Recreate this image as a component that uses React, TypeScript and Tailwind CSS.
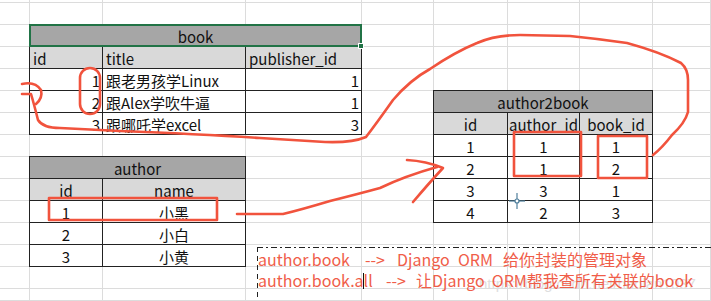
type Cell = { c: string; t?: string; a?: 'l' | 'r' | 'c' };

const base =
  'flex items-center border-r border-b border-[#222] text-[15px] leading-none text-[#111] pt-[2px] whitespace-nowrap';

const align = (a?: 'l' | 'r' | 'c') =>
  a === 'l' ? 'justify-start pl-[3px]' : a === 'r' ? 'justify-end pr-[2px]' : 'justify-center';

const book: Cell[] = [
  { c: 'row-start-4 col-start-2 bg-[#d9d9d9] border-l -ml-px', t: 'id', a: 'l' },
  { c: 'row-start-4 col-start-3 bg-[#d9d9d9]', t: 'title', a: 'l' },
  { c: 'row-start-4 col-start-4 bg-[#d9d9d9]', t: 'publisher_id', a: 'l' },
  { c: 'row-start-5 col-start-2 border-l -ml-px', t: '1', a: 'r' },
  { c: 'row-start-5 col-start-3', t: '跟老男孩学Linux', a: 'l' },
  { c: 'row-start-5 col-start-4', t: '1', a: 'r' },
  { c: 'row-start-6 col-start-2 border-l -ml-px', t: '2', a: 'r' },
  { c: 'row-start-6 col-start-3', t: '跟Alex学吹牛逼', a: 'l' },
  { c: 'row-start-6 col-start-4', t: '1', a: 'r' },
  { c: 'row-start-7 col-start-2 border-l -ml-px', t: '3', a: 'r' },
  { c: 'row-start-7 col-start-3', t: '跟哪吒学excel', a: 'l' },
  { c: 'row-start-7 col-start-4', t: '3', a: 'r' },
];

const author: Cell[] = [
  { c: 'row-start-9 col-start-2 col-span-2 bg-[#a6a6a6] border-t border-l -mt-px -ml-px', t: 'author' },
  { c: 'row-start-10 col-start-2 bg-[#d9d9d9] border-l -ml-px', t: 'id' },
  { c: 'row-start-10 col-start-3 bg-[#d9d9d9]', t: 'name' },
  { c: 'row-start-11 col-start-2 border-l -ml-px', t: '1' },
  { c: 'row-start-11 col-start-3', t: '小黑' },
  { c: 'row-start-12 col-start-2 border-l -ml-px', t: '2' },
  { c: 'row-start-12 col-start-3', t: '小白' },
  { c: 'row-start-13 col-start-2 border-l -ml-px', t: '3' },
  { c: 'row-start-13 col-start-3', t: '小黄' },
];

const a2b: Cell[] = [
  { c: 'row-start-6 col-start-6 col-span-3 bg-[#a6a6a6] border-t border-l -mt-px -ml-px', t: 'author2book' },
  { c: 'row-start-7 col-start-6 bg-[#d9d9d9] border-l -ml-px', t: 'id' },
  { c: 'row-start-7 col-start-7 bg-[#d9d9d9]', t: 'author_id' },
  { c: 'row-start-7 col-start-8 bg-[#d9d9d9]', t: 'book_id' },
  { c: 'row-start-8 col-start-6 border-l -ml-px', t: '1' },
  { c: 'row-start-8 col-start-7', t: '1' },
  { c: 'row-start-8 col-start-8', t: '1' },
  { c: 'row-start-9 col-start-6 border-l -ml-px', t: '2' },
  { c: 'row-start-9 col-start-7', t: '1' },
  { c: 'row-start-9 col-start-8', t: '2' },
  { c: 'row-start-10 col-start-6 border-l -ml-px', t: '3' },
  { c: 'row-start-10 col-start-7', t: '3' },
  { c: 'row-start-10 col-start-8', t: '1' },
  { c: 'row-start-11 col-start-6 border-l -ml-px', t: '4' },
  { c: 'row-start-11 col-start-7', t: '2' },
  { c: 'row-start-11 col-start-8', t: '3' },
];

function Annotations() {
  const red = '#f1533d';
  return (
    <svg className="absolute inset-0 pointer-events-none" width="711" height="301" viewBox="0 0 711 301">
      <g fill="none" stroke={red} strokeWidth="2.6" strokeLinecap="round" strokeLinejoin="round">
        <path d="M22,84 Q35,81 41,90 Q43,98 36,104" />
        <path d="M22,94 L31,94 Q34,104 38,120 Q43,128 60,128 L120,131 Q200,134 260,138 L325,142 Q352,143 366,137 Q376,124 393,100 Q410,80 430,69 Q455,52 477,43 Q495,35 520,35 L570,36 Q600,39 627,43 Q660,52 681,63 Q688,69 688,80 L688,112 Q685,123 672,135 Q662,148 653,155" />
        <path d="M237,214 L283,214 Q300,210 330,201 Q358,194 380,188 Q405,176 437,167" />
        <path d="M407,160 Q426,161 443,168 Q430,182 413,202" />
        <rect x="80" y="68" width="20" height="46" rx="10" />
        <rect x="49" y="198" width="168" height="22" />
        <rect x="514" y="132" width="67" height="44" />
        <rect x="598" y="136" width="49" height="42" />
      </g>
      <g stroke="#4f7f9c" strokeWidth="1.2" fill="none">
        <line x1="509" y1="201" x2="525" y2="201" />
        <line x1="517" y1="193" x2="517" y2="209" />
        <circle cx="517" cy="201" r="2" fill="#fff" />
      </g>
    </svg>
  );
}

function TextBox() {
  return (
    <div className="absolute left-[257px] top-[247px] right-0 bottom-0 text-[#f05d49] text-[16px] leading-[21px] whitespace-pre">
      <svg className="absolute inset-0" width="454" height="54">
        <line x1="0" y1="0.5" x2="454" y2="0.5" stroke="#222" strokeWidth="1" strokeDasharray="6 3 2 3" />
        <line x1="0.5" y1="0" x2="0.5" y2="54" stroke="#222" strokeWidth="1" strokeDasharray="5 4" />
      </svg>
      <div className="absolute left-[222px] top-[26px] text-[15px] text-[#dedede] font-['Liberation_Sans',sans-serif]">
        https://blog.csdn.net/haolan1037
      </div>
      <div className="relative pt-[2px] pl-px">
        <div className="flex items-center">
          <span className="inline-block w-[107px]">author.book</span>
          <span className="inline-block w-[32px]">--&gt;</span>
          <span className="inline-block w-[61px]">Django</span>
          <span className="inline-block w-[45px]">ORM</span>
          <span>给你封装的管理对象</span>
        </div>
        <div className="flex items-center">
          <span className="inline-block w-[105px]">author.book.all</span>
          <span className="inline-block w-px h-[16px] bg-[#111]"></span>
          <span className="inline-block w-[22px]"></span>
          <span className="inline-block w-[24px]">--&gt;</span>
          <span className="inline-block w-[6px]"></span>
          <span>让Django  ORM帮我查所有关联的book</span>
        </div>
      </div>
    </div>
  );
}

export default function App() {
  const all = [...book, ...author, ...a2b];
  return (
    <div className="relative w-[711px] h-[301px] overflow-hidden bg-white grid font-['Noto_Sans_CJK_SC',sans-serif]">
      <div className="col-start-1 row-start-1 grid grid-cols-[30px_73px_143px_116px_72px_74px_72px_73px_1fr] grid-rows-[3px_repeat(13,22px)_1fr] h-[301px]">
        {Array.from({ length: 15 * 9 }).map((_, i) => (
          <div key={i} className="border-r border-b border-[#dcdcdc]" />
        ))}
      </div>
      <div className="col-start-1 row-start-1 grid grid-cols-[30px_73px_143px_116px_72px_74px_72px_73px_1fr] grid-rows-[3px_repeat(13,22px)_1fr] h-[301px]">
        <div className="row-start-3 col-start-2 col-span-3 -ml-px -mt-px relative flex items-center justify-center bg-[#a6a6a6] border-2 border-[#217346] text-[15px] leading-none text-[#111] pt-[2px]">
          book
          <span className="absolute -right-[4px] -bottom-[4px] w-[6px] h-[6px] bg-[#217346] border border-white"></span>
        </div>
        {all.map((x, i) => (
          <div key={i} className={`${base} ${align(x.a)} ${x.c}`}>
            {x.t}
          </div>
        ))}
      </div>
      <Annotations />
      <TextBox />
    </div>
  );
}
